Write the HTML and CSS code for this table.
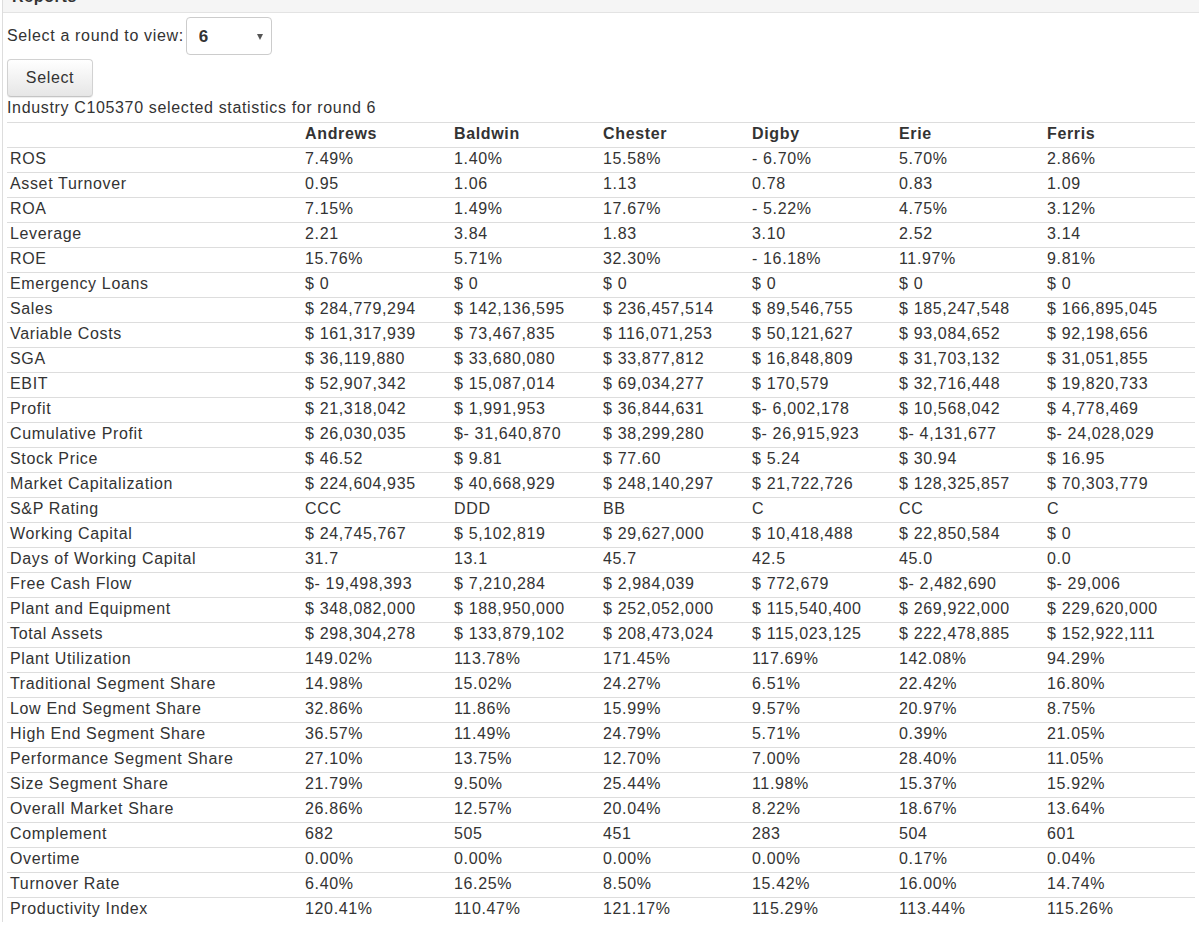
FILE: index.html
```html
<!DOCTYPE html>
<html>
<head>
<meta charset="utf-8">
<title>Reports</title>
<link rel="stylesheet" href="styles.css">
</head>
<body>
<div class="panel">
  <div class="panel-heading"><h3 class="panel-title">Reports</h3></div>
  <div class="panel-body">
    <form class="round-form">
      <div class="round-row">
        <label class="round-label" for="round">Select a round to view:</label>
        <span class="select-wrap">
          <select id="round" class="round-select">
            <option>1</option><option>2</option><option>3</option><option>4</option><option>5</option><option selected>6</option>
          </select>
        </span>
      </div>
      <button type="button" class="btn">Select</button>
    </form>
    <div class="caption">Industry C105370 selected statistics for round 6</div>
    <table class="stats">
      <colgroup>
        <col class="c-label"><col class="c-a"><col class="c-b"><col class="c-c"><col class="c-d"><col class="c-e"><col class="c-f">
      </colgroup>
      <thead>
        <tr><th></th><th>Andrews</th><th>Baldwin</th><th>Chester</th><th>Digby</th><th>Erie</th><th>Ferris</th></tr>
      </thead>
      <tbody>
        <tr><td>ROS</td><td>7.49%</td><td>1.40%</td><td>15.58%</td><td>- 6.70%</td><td>5.70%</td><td>2.86%</td></tr>
        <tr><td>Asset Turnover</td><td>0.95</td><td>1.06</td><td>1.13</td><td>0.78</td><td>0.83</td><td>1.09</td></tr>
        <tr><td>ROA</td><td>7.15%</td><td>1.49%</td><td>17.67%</td><td>- 5.22%</td><td>4.75%</td><td>3.12%</td></tr>
        <tr><td>Leverage</td><td>2.21</td><td>3.84</td><td>1.83</td><td>3.10</td><td>2.52</td><td>3.14</td></tr>
        <tr><td>ROE</td><td>15.76%</td><td>5.71%</td><td>32.30%</td><td>- 16.18%</td><td>11.97%</td><td>9.81%</td></tr>
        <tr><td>Emergency Loans</td><td>$ 0</td><td>$ 0</td><td>$ 0</td><td>$ 0</td><td>$ 0</td><td>$ 0</td></tr>
        <tr><td>Sales</td><td>$ 284,779,294</td><td>$ 142,136,595</td><td>$ 236,457,514</td><td>$ 89,546,755</td><td>$ 185,247,548</td><td>$ 166,895,045</td></tr>
        <tr><td>Variable Costs</td><td>$ 161,317,939</td><td>$ 73,467,835</td><td>$ 116,071,253</td><td>$ 50,121,627</td><td>$ 93,084,652</td><td>$ 92,198,656</td></tr>
        <tr><td>SGA</td><td>$ 36,119,880</td><td>$ 33,680,080</td><td>$ 33,877,812</td><td>$ 16,848,809</td><td>$ 31,703,132</td><td>$ 31,051,855</td></tr>
        <tr><td>EBIT</td><td>$ 52,907,342</td><td>$ 15,087,014</td><td>$ 69,034,277</td><td>$ 170,579</td><td>$ 32,716,448</td><td>$ 19,820,733</td></tr>
        <tr><td>Profit</td><td>$ 21,318,042</td><td>$ 1,991,953</td><td>$ 36,844,631</td><td>$- 6,002,178</td><td>$ 10,568,042</td><td>$ 4,778,469</td></tr>
        <tr><td>Cumulative Profit</td><td>$ 26,030,035</td><td>$- 31,640,870</td><td>$ 38,299,280</td><td>$- 26,915,923</td><td>$- 4,131,677</td><td>$- 24,028,029</td></tr>
        <tr><td>Stock Price</td><td>$ 46.52</td><td>$ 9.81</td><td>$ 77.60</td><td>$ 5.24</td><td>$ 30.94</td><td>$ 16.95</td></tr>
        <tr><td>Market Capitalization</td><td>$ 224,604,935</td><td>$ 40,668,929</td><td>$ 248,140,297</td><td>$ 21,722,726</td><td>$ 128,325,857</td><td>$ 70,303,779</td></tr>
        <tr><td>S&amp;P Rating</td><td>CCC</td><td>DDD</td><td>BB</td><td>C</td><td>CC</td><td>C</td></tr>
        <tr><td>Working Capital</td><td>$ 24,745,767</td><td>$ 5,102,819</td><td>$ 29,627,000</td><td>$ 10,418,488</td><td>$ 22,850,584</td><td>$ 0</td></tr>
        <tr><td>Days of Working Capital</td><td>31.7</td><td>13.1</td><td>45.7</td><td>42.5</td><td>45.0</td><td>0.0</td></tr>
        <tr><td>Free Cash Flow</td><td>$- 19,498,393</td><td>$ 7,210,284</td><td>$ 2,984,039</td><td>$ 772,679</td><td>$- 2,482,690</td><td>$- 29,006</td></tr>
        <tr><td>Plant and Equipment</td><td>$ 348,082,000</td><td>$ 188,950,000</td><td>$ 252,052,000</td><td>$ 115,540,400</td><td>$ 269,922,000</td><td>$ 229,620,000</td></tr>
        <tr><td>Total Assets</td><td>$ 298,304,278</td><td>$ 133,879,102</td><td>$ 208,473,024</td><td>$ 115,023,125</td><td>$ 222,478,885</td><td>$ 152,922,111</td></tr>
        <tr><td>Plant Utilization</td><td>149.02%</td><td>113.78%</td><td>171.45%</td><td>117.69%</td><td>142.08%</td><td>94.29%</td></tr>
        <tr><td>Traditional Segment Share</td><td>14.98%</td><td>15.02%</td><td>24.27%</td><td>6.51%</td><td>22.42%</td><td>16.80%</td></tr>
        <tr><td>Low End Segment Share</td><td>32.86%</td><td>11.86%</td><td>15.99%</td><td>9.57%</td><td>20.97%</td><td>8.75%</td></tr>
        <tr><td>High End Segment Share</td><td>36.57%</td><td>11.49%</td><td>24.79%</td><td>5.71%</td><td>0.39%</td><td>21.05%</td></tr>
        <tr><td>Performance Segment Share</td><td>27.10%</td><td>13.75%</td><td>12.70%</td><td>7.00%</td><td>28.40%</td><td>11.05%</td></tr>
        <tr><td>Size Segment Share</td><td>21.79%</td><td>9.50%</td><td>25.44%</td><td>11.98%</td><td>15.37%</td><td>15.92%</td></tr>
        <tr><td>Overall Market Share</td><td>26.86%</td><td>12.57%</td><td>20.04%</td><td>8.22%</td><td>18.67%</td><td>13.64%</td></tr>
        <tr><td>Complement</td><td>682</td><td>505</td><td>451</td><td>283</td><td>504</td><td>601</td></tr>
        <tr><td>Overtime</td><td>0.00%</td><td>0.00%</td><td>0.00%</td><td>0.00%</td><td>0.17%</td><td>0.04%</td></tr>
        <tr><td>Turnover Rate</td><td>6.40%</td><td>16.25%</td><td>8.50%</td><td>15.42%</td><td>16.00%</td><td>14.74%</td></tr>
        <tr><td>Productivity Index</td><td>120.41%</td><td>110.47%</td><td>121.17%</td><td>115.29%</td><td>113.44%</td><td>115.26%</td></tr>
      </tbody>
    </table>
  </div>
</div>
</body>
</html>
```
FILE: styles.css
```css
html, body {
  margin: 0;
  padding: 0;
  background: #fff;
  overflow-x: hidden;
}
body {
  font-family: "Liberation Sans", Arial, sans-serif;
  font-size: 16px;
  letter-spacing: 0.65px;
  color: #333;
}
.panel {
  margin-top: -22px;
  margin-left: 2px;
  border-left: 1px solid #ddd;
  background: #fff;
}
.panel-heading {
  background: #f5f5f5;
  border-bottom: 1px solid #e3e3e3;
  padding: 10px 9px 6px;
}
.panel-title {
  margin: 0;
  font-size: 16px;
  line-height: 18px;
  font-weight: bold;
  color: #333;
}
.panel-body {
  padding: 4px 4px 0 4px;
}
.round-form {
  margin: 0;
  display: flex;
  flex-direction: column;
  align-items: flex-start;
  gap: 4px;
}
.round-row {
  display: flex;
  align-items: center;
  gap: 2px;
  height: 38px;
}
.round-label {
  line-height: 20px;
}
.select-wrap {
  position: relative;
  display: inline-block;
}
.round-select {
  appearance: none;
  -webkit-appearance: none;
  width: 86px;
  height: 38px;
  box-sizing: border-box;
  border: 1px solid #ccc;
  border-radius: 4px;
  background: #fff;
  padding: 0 0 0 12px;
  font-family: "Liberation Sans", Arial, sans-serif;
  font-size: 17px;
  font-weight: bold;
  color: #333;
  outline: none;
}
.select-wrap::after {
  content: "";
  position: absolute;
  right: 9px;
  top: 17px;
  border-left: 3.5px solid transparent;
  border-right: 3.5px solid transparent;
  border-top: 6px solid #555;
  pointer-events: none;
}
.btn {
  width: 86px;
  height: 38px;
  box-sizing: border-box;
  border: 1px solid #d2d2d2;
  border-bottom-color: #c4c4c4;
  border-radius: 4px;
  background: linear-gradient(to bottom, #ffffff 0%, #e6e6e6 100%);
  box-shadow: 0 1px 1px rgba(0, 0, 0, 0.075);
  font-family: "Liberation Sans", Arial, sans-serif;
  font-size: 16px;
  letter-spacing: 0.65px;
  color: #333;
  padding: 0;
  cursor: pointer;
}
.caption {
  margin-top: 1px;
  line-height: 20px;
  padding-bottom: 4px;
}
.stats {
  width: 1188px;
  table-layout: fixed;
  border-collapse: collapse;
  border-spacing: 0;
}
.c-label { width: 295px; }
.c-a { width: 149px; }
.c-b { width: 149px; }
.c-c { width: 149px; }
.c-d { width: 147px; }
.c-e { width: 148px; }
.c-f { width: 151px; }
.stats th,
.stats td {
  border-top: 1px solid #ddd;
  padding: 1px 3px 3px;
  line-height: 20px;
  text-align: left;
  vertical-align: top;
  white-space: nowrap;
  font-size: 16px;
}
.stats th {
  font-weight: bold;
}
```
